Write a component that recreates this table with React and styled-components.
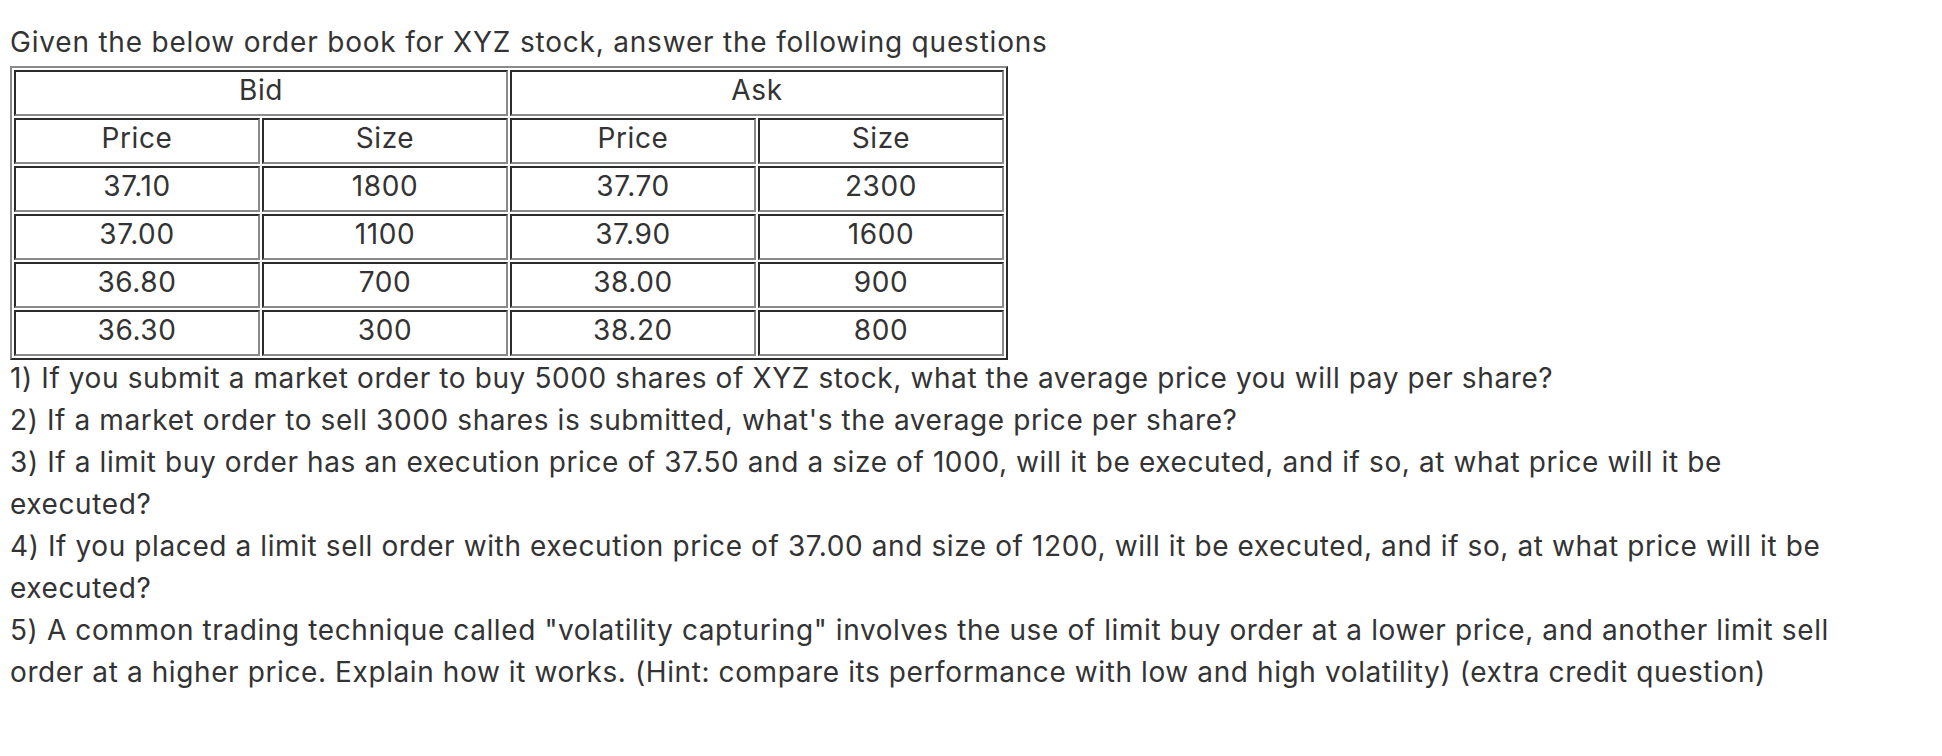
import React from "react";
import styled, { createGlobalStyle } from "styled-components";

const GlobalStyle = createGlobalStyle`
  html, body { margin: 0; padding: 0; background: #ffffff; }
  body {
    color: #333333;
    font-family: Inter, "Open Sans", Arial, sans-serif;
    font-size: 28px;
    line-height: 42px;
    letter-spacing: 0.6px;
  }
`;

const Page = styled.main`
  padding: 21px 0 0 10px;
  width: 1845px;
`;

const Intro = styled.p`
  margin: 0;
  letter-spacing: 0.8px;
`;

const Book = styled.table`
  margin-top: 3px;
  border-collapse: separate;
  border-spacing: 2px;
  border-width: 2px;
  border-style: solid;
  border-color: #8a8a8a #2b2b2b #2b2b2b #8a8a8a;
  table-layout: fixed;
  width: 998px;
`;

const Cell = styled.td`
  box-sizing: border-box;
  height: 46px;
  padding: 0 0 6px 0;
  border-width: 2px;
  border-style: solid;
  border-color: #2b2b2b #8a8a8a #8a8a8a #2b2b2b;
  text-align: center;
  vertical-align: middle;
  line-height: 34px;
`;

const Questions = styled.div`
  margin-top: -3px;
`;

const Question = styled.p`
  margin: 0;
`;

const rows = [
  ["37.10", "1800", "37.70", "2300"],
  ["37.00", "1100", "37.90", "1600"],
  ["36.80", "700", "38.00", "900"],
  ["36.30", "300", "38.20", "800"],
];

const questions = [
  "1) If you submit a market order to buy 5000 shares of XYZ stock, what the average price you will pay per share?",
  "2) If a market order to sell 3000 shares is submitted, what's the average price per share?",
  "3) If a limit buy order has an execution price of 37.50 and a size of 1000, will it be executed, and if so, at what price will it be executed?",
  "4) If you placed a limit sell order with execution price of 37.00 and size of 1200, will it be executed, and if so, at what price will it be executed?",
  "5) A common trading technique called \"volatility capturing\" involves the use of limit buy order at a lower price, and another limit sell order at a higher price. Explain how it works. (Hint: compare its performance with low and high volatility) (extra credit question)",
];

export default function App() {
  return (
    <>
      <GlobalStyle />
      <Page>
        <Intro>Given the below order book for XYZ stock, answer the following questions</Intro>
        <Book>
          <tbody>
            <tr>
              <Cell colSpan={2}>Bid</Cell>
              <Cell colSpan={2}>Ask</Cell>
            </tr>
            <tr>
              <Cell>Price</Cell>
              <Cell>Size</Cell>
              <Cell>Price</Cell>
              <Cell>Size</Cell>
            </tr>
            {rows.map((r, i) => (
              <tr key={i}>
                {r.map((v, j) => (
                  <Cell key={j}>{v}</Cell>
                ))}
              </tr>
            ))}
          </tbody>
        </Book>
        <Questions>
          {questions.map((q, i) => (
            <Question key={i}>{q}</Question>
          ))}
        </Questions>
      </Page>
    </>
  );
}
